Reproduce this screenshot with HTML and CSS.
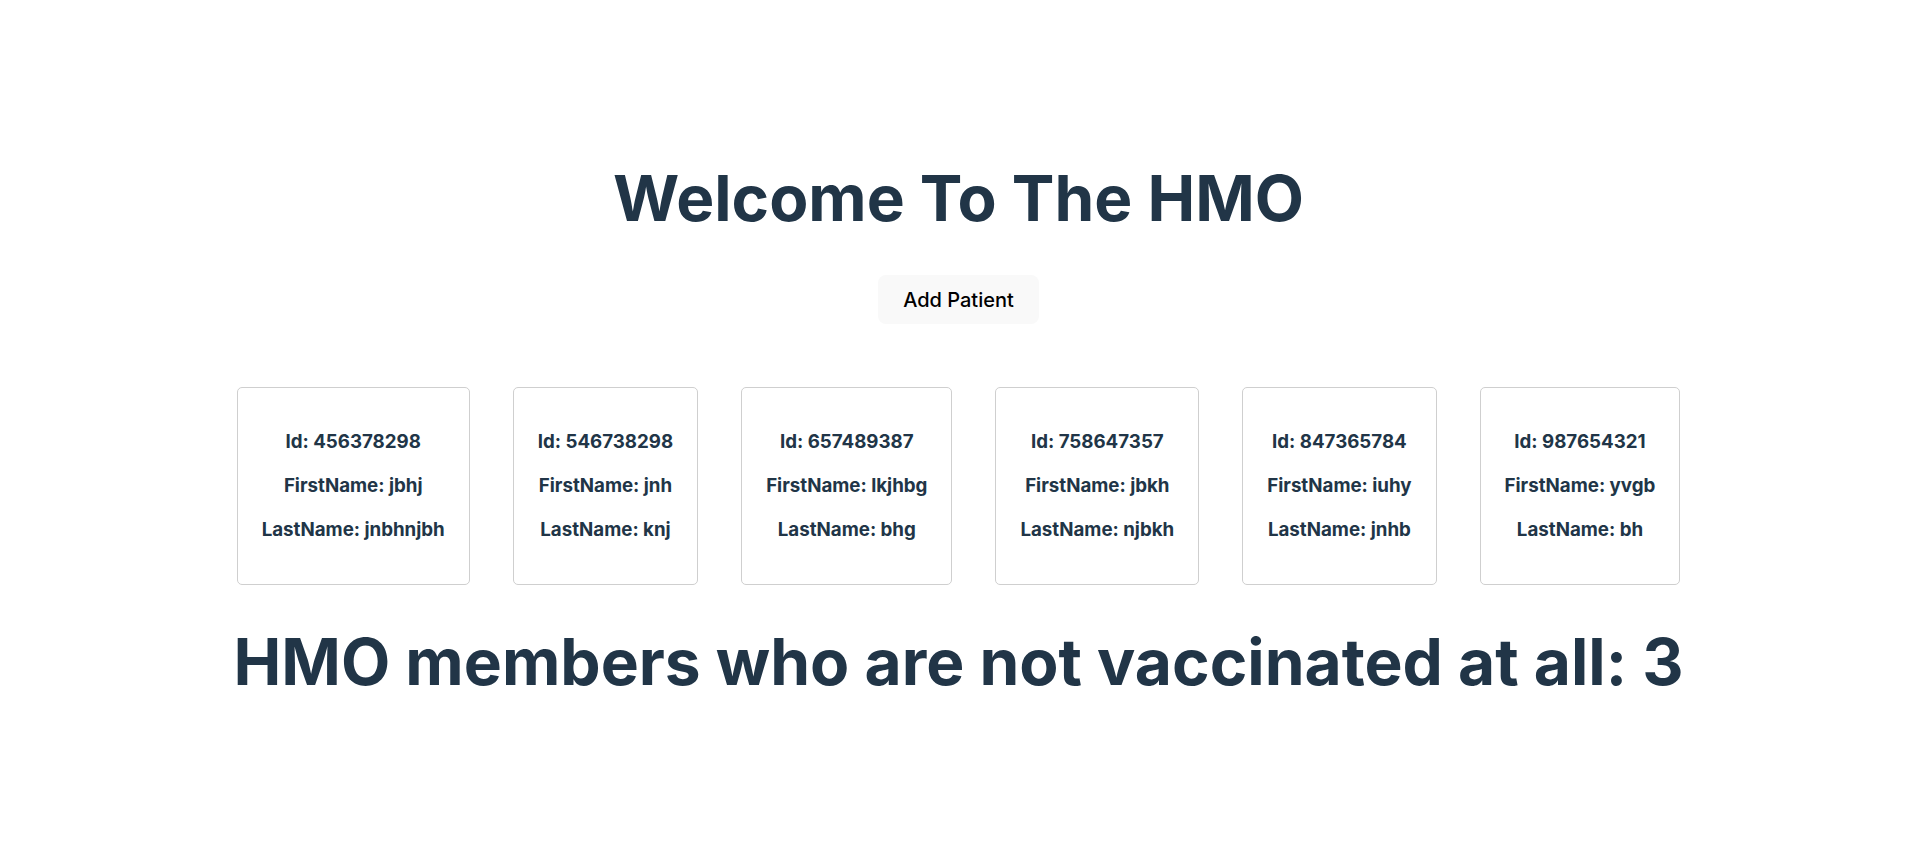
FILE: index.html
```html
<!DOCTYPE html>
<html lang="en">
<head>
<meta charset="UTF-8">
<title>HMO</title>
<link rel="stylesheet" href="styles.css">
</head>
<body>
<div class="app">
  <h1 class="title">Welcome To The HMO</h1>
  <button class="add-btn">Add Patient</button>
  <div class="cards">
    <div class="card"><p>Id: 456378298</p><p>FirstName: jbhj</p><p>LastName: jnbhnjbh</p></div>
    <div class="card"><p>Id: 546738298</p><p>FirstName: jnh</p><p>LastName: knj</p></div>
    <div class="card"><p>Id: 657489387</p><p>FirstName: lkjhbg</p><p>LastName: bhg</p></div>
    <div class="card"><p>Id: 758647357</p><p>FirstName: jbkh</p><p>LastName: njbkh</p></div>
    <div class="card"><p>Id: 847365784</p><p>FirstName: iuhy</p><p>LastName: jnhb</p></div>
    <div class="card"><p>Id: 987654321</p><p>FirstName: yvgb</p><p>LastName: bh</p></div>
  </div>
  <h1 class="summary">HMO members who are not vaccinated at all: 3</h1>
</div>
</body>
</html>
```
FILE: styles.css
```css
html, body {
  margin: 0;
  padding: 0;
  background: #ffffff;
}
body {
  font-family: Inter, "Noto Sans", sans-serif;
  color: #213547;
}
.app {
  display: flex;
  flex-direction: column;
  align-items: center;
  padding-top: 159px;
}
.title {
  margin: 0;
  font-size: 63.9px;
  font-weight: 700;
  line-height: 78px;
  color: #213547;
}
.add-btn {
  margin-top: 38px;
  height: 49px;
  padding: 0 24px;
  border: 1px solid transparent;
  border-radius: 8px;
  background: #f9f9f9;
  font-family: Inter, "Noto Sans", sans-serif;
  font-size: 20px;
  font-weight: 500;
  color: #000000;
  cursor: pointer;
}
.cards {
  display: flex;
  gap: 43px;
  justify-content: center;
  margin-top: 63px;
}
.card {
  border: 1px solid #cfcfcf;
  border-radius: 5px;
  padding: 22px 24px;
  text-align: center;
}
.card p {
  margin: 20px 0;
  font-size: 18.72px;
  font-weight: 700;
  line-height: 24px;
  white-space: nowrap;
}
.summary {
  margin: 38px 0 0;
  font-size: 64px;
  font-weight: 700;
  line-height: 78px;
  color: #213547;
}
```
